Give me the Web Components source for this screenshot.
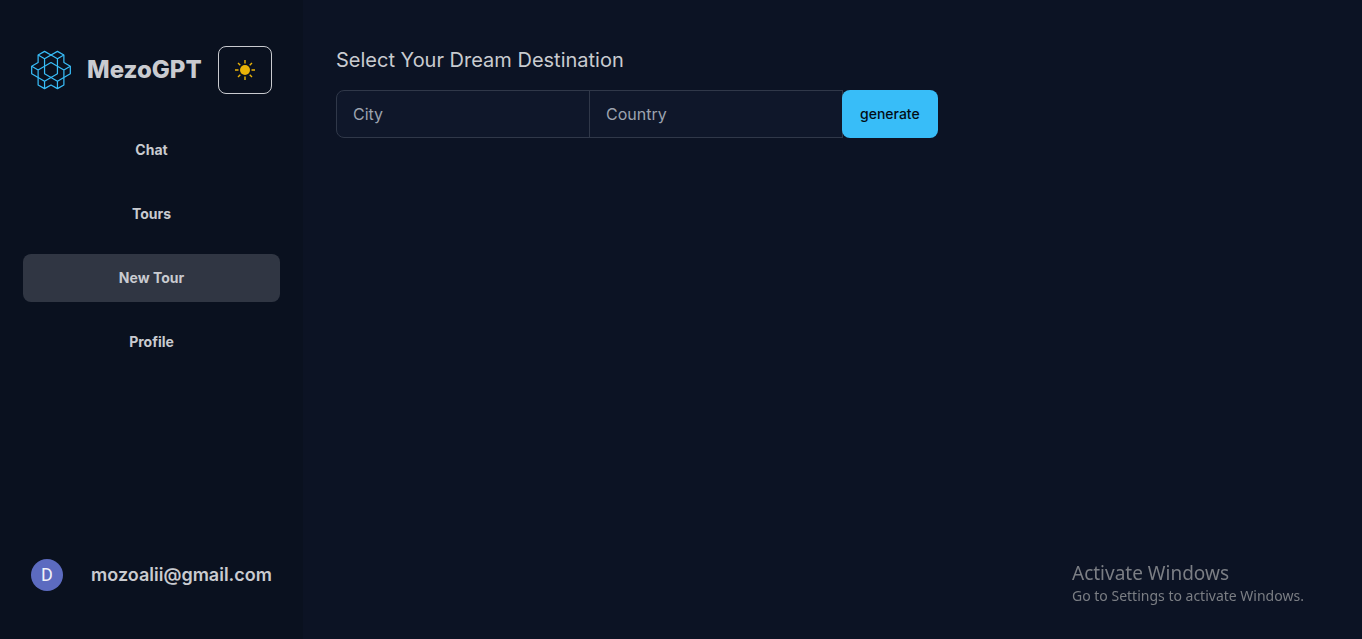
<!DOCTYPE html>
<html lang="en" data-theme="night">
<head>
<meta charset="utf-8">
<meta name="viewport" content="width=device-width, initial-scale=1">
<title>MezoGPT</title>
<style>
  :root {
    --side: #0a111f;
    --page: #0c1324;
    --field: #0f172a;
    --line: #303849;
    --text: #c9cbd0;
    --primary: #38bdf8;
    --warning: #eab308;
  }
  body {
    margin: 0;
    background: var(--page);
    color: var(--text);
    font: 16px/24px Inter, "Liberation Sans", sans-serif;
  }
</style>
</head>
<body>
<mezo-app></mezo-app>
<script>
const define = (name, html) => {
  const template = document.createElement("template");
  template.innerHTML = html;
  customElements.define(name, class extends HTMLElement {
    constructor() {
      super();
      this.attachShadow({ mode: "open" }).append(template.content.cloneNode(true));
    }
  });
};

define("mezo-logo", `
<style>
  :host { display: block; width: 40px; height: 40px; color: var(--primary); }
  svg { display: block; width: 100%; height: 100%; }
</style>
<svg viewBox="-59 -59 118 118" fill="none" stroke="currentColor" stroke-width="3.6" stroke-linejoin="round" aria-hidden="true">
  <path d="M0-44 19-55 38-44V-22L57-11V11L38 22V44L19 55 0 44-19 55-38 44V22L-57 11V-11L-38-22V-44L-19-55Z"/>
  <path d="M0-22 19-11V11L0 22-19 11V-11Z"/>
  <path d="M-38-44-19-33 0-44 19-33 38-44M-19-33V-11M19-33V-11M57-11 38 0V22M19-11 38 0M-57-11-38 0V22M-19-11-38 0M-38 22-19 33 0 22 19 33 38 22M-19 33V55M19 33V55"/>
</svg>`);

define("theme-toggle", `
<style>
  :host { display: block; }
  button {
    display: flex; align-items: center; padding: 0 16px; height: 48px;
    border: 1px solid var(--text); border-radius: 8px;
    background: none; color: var(--warning); cursor: pointer;
  }
  svg { display: block; width: 20px; height: 20px; }
</style>
<button type="button" aria-label="Toggle theme">
  <svg viewBox="0 0 20 20" aria-hidden="true">
    <circle cx="10" cy="10" r="5" fill="currentColor"/>
    <path d="M10 0v3.5M10 16.500v3.500M0 10h3.500M16.500 10h3.500M3 3l2.300 2.300M14.700 14.700l2.300 2.300M3 17l2.300-2.300M14.700 5.300l2.300-2.300" stroke="currentColor" stroke-width="1.4" fill="none"/>
  </svg>
</button>`);

define("sidebar-header", `
<style>
  :host { display: flex; align-items: center; gap: 16px; padding: 0 8px; }
  h2 { margin: 0; flex: 1; font-size: 24px; line-height: 32px; font-weight: 800; color: var(--text); }
</style>
<mezo-logo></mezo-logo>
<h2><slot></slot></h2>
<theme-toggle></theme-toggle>`);

customElements.define("nav-item", class extends HTMLElement {
  connectedCallback() {
    if (this.shadowRoot) return;
    this.attachShadow({ mode: "open" }).innerHTML = `
<style>
  :host { display: block; }
  a {
    display: flex; align-items: center; justify-content: center; height: 48px;
    border-radius: 8px; color: inherit; text-decoration: none;
    font-size: 14px; line-height: 20px; font-weight: 700;
  }
  :host([active]) a { background: #303643; }
</style>
<a href="${this.getAttribute("to")}"><slot></slot></a>`;
    if (this.hasAttribute("active")) this.shadowRoot.querySelector("a").setAttribute("aria-current", "page");
  }
});

define("member-profile", `
<style>
  :host { display: flex; align-items: center; justify-content: space-between; padding: 0 8px; }
  button {
    width: 32px; height: 32px; padding: 0; border: 0; border-radius: 50%;
    background: #5c6bc0; color: #f1f2f8; cursor: pointer;
    font: 18px/32px Roboto, sans-serif;
  }
  p { margin: 0; font-size: 18px; line-height: 28px; font-weight: 600; }
</style>
<button type="button" aria-label="Account">D</button>
<p><slot></slot></p>`);

define("app-sidebar", `
<style>
  :host {
    display: grid; grid-template-rows: auto 1fr auto; box-sizing: border-box;
    padding: 46px 23px 48px; background: var(--side);
  }
  nav { display: flex; flex-direction: column; gap: 16px; padding: 32px 0; }
</style>
<sidebar-header>MezoGPT</sidebar-header>
<nav aria-label="Main">
  <nav-item to="#chat">Chat</nav-item>
  <nav-item to="#tours">Tours</nav-item>
  <nav-item to="#new-tour" active>New Tour</nav-item>
  <nav-item to="#profile">Profile</nav-item>
</nav>
<member-profile>mozoalii@gmail.com</member-profile>`);

define("new-tour", `
<style>
  :host { display: block; }
  h1 { margin: 0 0 16px; font-size: 20px; line-height: 28px; font-weight: 400; }
  form { display: flex; }
  input {
    box-sizing: border-box; flex: 0 1 254px; min-width: 0; height: 48px; margin: 0;
    padding: 0 16px; border: 1px solid var(--line); border-radius: 0;
    background: var(--field); color: var(--text); font: inherit; outline-color: var(--primary);
  }
  input:first-child { border-radius: 8px 0 0 8px; }
  input + input, button { margin-left: -1px; }
  input::placeholder { color: #9ca3af; opacity: 1; }
  button {
    height: 48px; padding: 0 18px; border: 0; border-radius: 8px;
    background: var(--primary); color: #030d15; cursor: pointer;
    font: 500 14px/20px Inter, "Liberation Sans", sans-serif;
  }
</style>
<h1>Select Your Dream Destination</h1>
<form>
  <input type="text" name="city" placeholder="City" aria-label="City" required>
  <input type="text" name="country" placeholder="Country" aria-label="Country" required>
  <button type="submit">generate</button>
</form>`);

define("activation-notice", `
<style>
  :host {
    display: block; position: fixed; right: 54px; bottom: 33px; min-width: 236px; pointer-events: none;
    color: #7b7e84; font-family: "Noto Sans", "Open Sans", sans-serif;
  }
  p { margin: 0; font-size: 14px; line-height: 20px; white-space: nowrap; }
  .title { font-size: 19px; line-height: 26px; }
</style>
<p class="title">Activate Windows</p>
<p>Go to Settings to activate Windows.</p>`);

define("mezo-app", `
<style>
  :host { display: grid; grid-template-columns: 303px minmax(0, 1fr); min-height: 100vh; }
  main { padding: 46px 33px; }
</style>
<app-sidebar></app-sidebar>
<main><new-tour></new-tour></main>
<activation-notice></activation-notice>`);
</script>
</body>
</html>
